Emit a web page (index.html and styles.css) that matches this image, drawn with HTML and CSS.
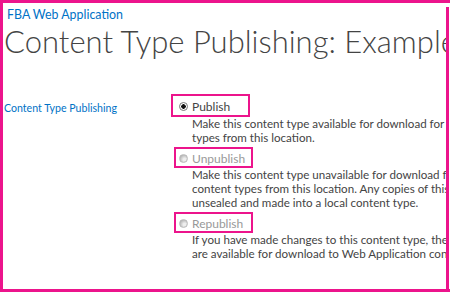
FILE: index.html
```html
<!DOCTYPE html>
<html lang="en">
<head>
    <meta charset="UTF-8">
    <title>Content Type Publishing</title>
    <link rel="stylesheet" href="styles.css">
</head>
<body>
    <div class="frame">
        <div class="page">
            <header class="page-header">
                <p class="crumb">FBA Web Application</p>
                <h1>Content Type Publishing: Example</h1>
            </header>

            <section class="section">
                <h2 class="section-label">Content Type Publishing</h2>
                <div class="options">
                    <div class="option">
                        <label class="choice first"><span class="radio checked"></span>Publish</label>
                        <p class="desc">Make this content type available for download for all Web Site Collections that consume content<br>types from this location.</p>
                    </div>
                    <div class="option">
                        <label class="choice disabled"><span class="radio"></span>Unpublish</label>
                        <p class="desc">Make this content type unavailable for download for all Web Site Collections that consume<br>content types from this location. Any copies of this content type being used in other site collections will be<br>unsealed and made into a local content type.</p>
                    </div>
                    <div class="option">
                        <label class="choice disabled"><span class="radio"></span>Republish</label>
                        <p class="desc">If you have made changes to this content type, the content type needs to be republished before the changes<br>are available for download to Web Application consumers.</p>
                    </div>
                </div>
            </section>
        </div>
    </div>
</body>
</html>
```

FILE: styles.css
```css
* {
    box-sizing: border-box;
    margin: 0;
    padding: 0;
}

body {
    font-family: Lato, "Open Sans", sans-serif;
    color: #444;
    background: white;
}

.frame {
    width: 450px;
    height: 292px;
    display: flex;
    border: 3px solid #ec148c;
    border-right: none;
}

.page {
    flex: 1;
    min-width: 0;
    margin-top: 4px;
    margin-right: 1px;
    border-right: 3px solid #ec148c;
    overflow: hidden;
}

.crumb {
    font-size: 12.4px;
    line-height: 16px;
    color: #0072c6;
    padding-left: 4px;
}

h1 {
    font-weight: 300;
    font-size: 31px;
    line-height: 36px;
    white-space: nowrap;
    color: #444;
    padding-left: 1px;
}

.section {
    display: grid;
    grid-template-columns: 168px auto;
    margin-top: 35px;
}

.section-label {
    font-size: 10.6px;
    line-height: 14px;
    font-weight: normal;
    color: #0072c6;
    padding: 7px 0 0 1px;
    white-space: nowrap;
}

.options {
    white-space: nowrap;
}

.option + .option {
    margin-top: 2px;
}

.choice {
    display: flex;
    align-items: center;
    gap: 4px;
    width: 79px;
    height: 21px;
    margin-left: 3px;
    border: 2px solid #ec148c;
    padding: 1px 0 0 3px;
    font-size: 12px;
    line-height: 15px;
    color: #444;
}

.choice.first {
    height: 23px;
    margin-left: 0;
    padding-left: 6px;
}

.choice.disabled {
    color: #999;
}

.radio {
    flex: none;
    width: 9px;
    height: 9px;
    border-radius: 50%;
    border: 1px solid #888;
}

.radio.checked {
    background: radial-gradient(circle, #111 0 2px, #fff 2.5px);
    border-color: #777;
}

.choice.disabled .radio {
    border-color: #bbb;
    background: radial-gradient(circle at 65% 65%, #eee 20%, #aaa 85%);
}

.desc {
    font-size: 11.6px;
    line-height: 14px;
    padding-left: 21px;
    color: #444;
}
```
